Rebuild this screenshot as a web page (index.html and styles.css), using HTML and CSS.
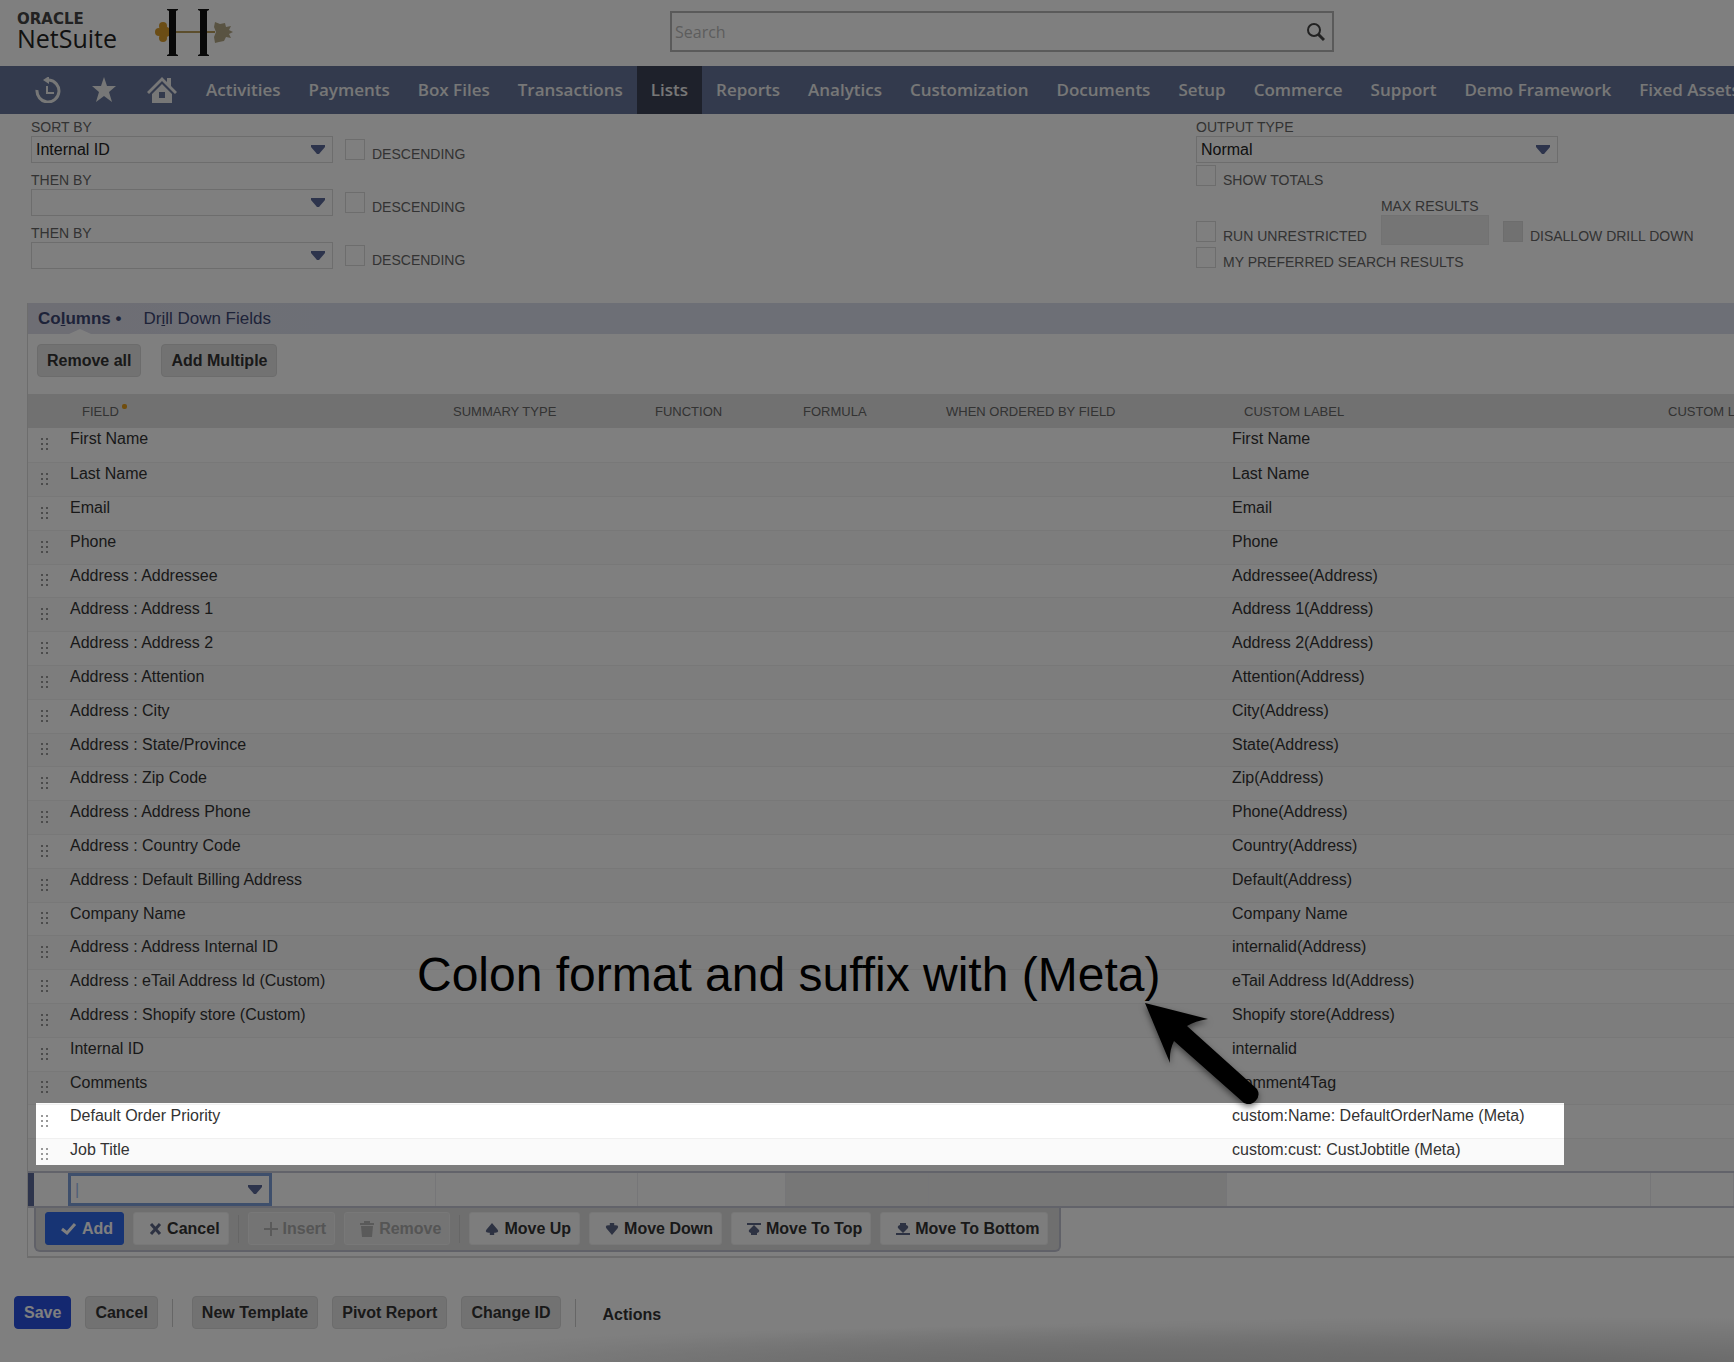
FILE: index.html
```html
<!DOCTYPE html>
<html lang="en">
  <head>
    <meta charset="utf-8" />
    <meta name="viewport" content="width=device-width, initial-scale=1.0" />
    <title>Saved Search - NetSuite</title>
    <link rel="stylesheet" href="styles.css">
  </head>
  <body>
    <header class="header">
      <div class="brand">
        <div class="brand-oracle">ORACLE</div>
        <div class="brand-name">NetSuite</div>
      </div>
      <svg class="company-logo" width="78" height="48" viewBox="0 0 78 48">
        <g fill="#d79a2b">
          <circle cx="8" cy="17" r="4" />
          <circle cx="4" cy="23" r="4" />
          <circle cx="8" cy="29" r="4" />
          <circle cx="11" cy="23" r="5" />
        </g>
        <path d="M20 23h40" stroke="#b99c5a" stroke-width="2" />
        <path d="M60 13l5 2 5-1 1 4 5-1-2 4 4 2-4 2 2 4-5-1-2 4-5 1-4 1-1-6 2-5-2-5z" fill="#b3a784" />
        <path d="M12 0h11v1l-2 1v43l2 1v1H12v-1l2-1V2l-2-1zM43 0h11v1l-2 1v43l2 1v1H43v-1l2-1V2l-2-1z" fill="#111" />
      </svg>
      <form class="search">
        <input type="text" placeholder="Search" aria-label="Search" />
        <button type="button" aria-label="Run search">
          <svg width="20" height="20" viewBox="0 0 20 20" fill="none" stroke="#444" stroke-width="2">
            <circle cx="9" cy="8" r="6" />
            <path d="M13 12l6 6" stroke-width="3" />
          </svg>
        </button>
      </form>
    </header>

    <nav class="nav">
      <a class="nav-icon" href="#recent" aria-label="Recent records">
        <svg width="26" height="26" viewBox="0 0 26 26" fill="none" stroke="currentColor" stroke-width="3">
          <path d="M2 13a11 11 0 1 0 12-10" />
          <path d="M12 9v7h7" stroke-width="2" />
          <path d="M8 3l6-4v8z" fill="currentColor" stroke="none" />
        </svg>
      </a>
      <a class="nav-icon" href="#shortcuts" aria-label="Shortcuts">
        <svg width="26" height="26" viewBox="0 0 26 26" fill="currentColor">
          <path d="M13 0l3 9h9l-7 6 3 10-8-6-8 6 3-10-7-6h9z" />
        </svg>
      </a>
      <a class="nav-icon" href="#home" aria-label="Home">
        <svg width="30" height="26" viewBox="0 0 30 26" fill="currentColor">
          <path d="M15 0l5 5V1h4v8l6 6-2 2L15 4 2 17l-2-2z" />
          <path d="M15 7l10 10v9H5v-9zM12 15v6h6v-6z" fill-rule="evenodd" />
        </svg>
      </a>
      <a href="#activities">Activities</a>
      <a href="#payments">Payments</a>
      <a href="#box">Box Files</a>
      <a href="#transactions">Transactions</a>
      <a class="active" href="#lists">Lists</a>
      <a href="#reports">Reports</a>
      <a href="#analytics">Analytics</a>
      <a href="#customization">Customization</a>
      <a href="#documents">Documents</a>
      <a href="#setup">Setup</a>
      <a href="#commerce">Commerce</a>
      <a href="#support">Support</a>
      <a href="#demo">Demo Framework</a>
      <a href="#assets">Fixed Assets</a>
    </nav>

    <section class="options">
      <div class="sort">
        <div class="sort-row">
          <div class="field">
            <label for="sort1">SORT BY</label>
            <select id="sort1"><option>Internal ID</option></select>
          </div>
          <label class="check"><input type="checkbox" />DESCENDING</label>
        </div>
        <div class="sort-row">
          <div class="field">
            <label for="sort2">THEN BY</label>
            <select id="sort2"><option></option></select>
          </div>
          <label class="check"><input type="checkbox" />DESCENDING</label>
        </div>
        <div class="sort-row">
          <div class="field">
            <label for="sort3">THEN BY</label>
            <select id="sort3"><option></option></select>
          </div>
          <label class="check"><input type="checkbox" />DESCENDING</label>
        </div>
      </div>

      <div class="output">
        <div class="field field-wide">
          <label for="output">OUTPUT TYPE</label>
          <select id="output"><option>Normal</option></select>
        </div>
        <label class="check"><input type="checkbox" />SHOW TOTALS</label>
        <div class="output-row">
          <label class="check"><input type="checkbox" />RUN UNRESTRICTED</label>
          <div class="field field-small">
            <label for="max">MAX RESULTS</label>
            <input id="max" type="text" disabled />
          </div>
          <label class="check"><input type="checkbox" disabled />DISALLOW DRILL DOWN</label>
        </div>
        <label class="check"><input type="checkbox" />MY PREFERRED SEARCH RESULTS</label>
      </div>
    </section>

    <section class="panel">
      <div class="tabs">
        <a class="tab active" href="#columns">Co<u>l</u>umns •</a>
        <a class="tab" href="#drill">Dr<u>i</u>ll Down Fields</a>
      </div>
      <div class="panel-actions">
        <button class="btn">Remove all</button>
        <button class="btn">Add Multiple</button>
      </div>

      <div class="sheet">
        <table class="columns">
          <colgroup>
            <col class="col-handle" />
            <col class="col-field" />
            <col class="col-summary" />
            <col class="col-function" />
            <col class="col-formula" />
            <col class="col-ordered" />
            <col class="col-label" />
            <col />
          </colgroup>
          <thead>
            <tr>
              <th></th>
              <th>FIELD<span class="required"></span></th>
              <th>SUMMARY TYPE</th>
              <th>FUNCTION</th>
              <th>FORMULA</th>
              <th>WHEN ORDERED BY FIELD</th>
              <th>CUSTOM LABEL</th>
              <th>CUSTOM LABEL</th>
            </tr>
          </thead>
          <tbody>
            <tr><td class="handle"></td><td>First Name</td><td></td><td></td><td></td><td></td><td>First Name</td><td></td></tr>
            <tr><td class="handle"></td><td>Last Name</td><td></td><td></td><td></td><td></td><td>Last Name</td><td></td></tr>
            <tr><td class="handle"></td><td>Email</td><td></td><td></td><td></td><td></td><td>Email</td><td></td></tr>
            <tr><td class="handle"></td><td>Phone</td><td></td><td></td><td></td><td></td><td>Phone</td><td></td></tr>
            <tr><td class="handle"></td><td>Address : Addressee</td><td></td><td></td><td></td><td></td><td>Addressee(Address)</td><td></td></tr>
            <tr><td class="handle"></td><td>Address : Address 1</td><td></td><td></td><td></td><td></td><td>Address 1(Address)</td><td></td></tr>
            <tr><td class="handle"></td><td>Address : Address 2</td><td></td><td></td><td></td><td></td><td>Address 2(Address)</td><td></td></tr>
            <tr><td class="handle"></td><td>Address : Attention</td><td></td><td></td><td></td><td></td><td>Attention(Address)</td><td></td></tr>
            <tr><td class="handle"></td><td>Address : City</td><td></td><td></td><td></td><td></td><td>City(Address)</td><td></td></tr>
            <tr><td class="handle"></td><td>Address : State/Province</td><td></td><td></td><td></td><td></td><td>State(Address)</td><td></td></tr>
            <tr><td class="handle"></td><td>Address : Zip Code</td><td></td><td></td><td></td><td></td><td>Zip(Address)</td><td></td></tr>
            <tr><td class="handle"></td><td>Address : Address Phone</td><td></td><td></td><td></td><td></td><td>Phone(Address)</td><td></td></tr>
            <tr><td class="handle"></td><td>Address : Country Code</td><td></td><td></td><td></td><td></td><td>Country(Address)</td><td></td></tr>
            <tr><td class="handle"></td><td>Address : Default Billing Address</td><td></td><td></td><td></td><td></td><td>Default(Address)</td><td></td></tr>
            <tr><td class="handle"></td><td>Company Name</td><td></td><td></td><td></td><td></td><td>Company Name</td><td></td></tr>
            <tr><td class="handle"></td><td>Address : Address Internal ID</td><td></td><td></td><td></td><td></td><td>internalid(Address)</td><td></td></tr>
            <tr><td class="handle"></td><td>Address : eTail Address Id (Custom)</td><td></td><td></td><td></td><td></td><td>eTail Address Id(Address)</td><td></td></tr>
            <tr><td class="handle"></td><td>Address : Shopify store (Custom)</td><td></td><td></td><td></td><td></td><td>Shopify store(Address)</td><td></td></tr>
            <tr><td class="handle"></td><td>Internal ID</td><td></td><td></td><td></td><td></td><td>internalid</td><td></td></tr>
            <tr><td class="handle"></td><td>Comments</td><td></td><td></td><td></td><td></td><td>Comment4Tag</td><td></td></tr>
            <tr><td class="handle"></td><td>Default Order Priority</td><td></td><td></td><td></td><td></td><td>custom:Name: DefaultOrderName (Meta)</td><td></td></tr>
            <tr><td class="handle"></td><td>Job Title</td><td></td><td></td><td></td><td></td><td>custom:cust: CustJobtitle (Meta)</td><td></td></tr>
          </tbody>
          <tfoot>
            <tr>
              <td class="marker"></td>
              <td class="edit"><select aria-label="Field"><option>|</option></select></td>
              <td></td>
              <td></td>
              <td class="locked"></td>
              <td class="locked"></td>
              <td></td>
              <td></td>
            </tr>
          </tfoot>
        </table>

        <div class="spotlight"></div>
        <div class="note">Colon format and suffix with (Meta)</div>
        <svg class="arrow" width="130" height="120" viewBox="0 0 130 120">
          <path d="M4 4L67 20Q54 22 46 27L116 90A10 10 0 0 1 103 104L33 42Q28 52 29 64Z" />
        </svg>
      </div>

      <div class="toolbar">
        <button class="tool primary">
          <svg width="16" height="12" viewBox="0 0 16 12"><path d="M1 6l5 4 8-9" fill="none" stroke="currentColor" stroke-width="3" /></svg>Add
        </button>
        <button class="tool">
          <svg width="13" height="12" viewBox="0 0 13 12"><path d="M2 1l9 10M11 1L2 11" fill="none" stroke="currentColor" stroke-width="3" /></svg>Cancel
        </button>
        <span class="divider"></span>
        <button class="tool" disabled>
          <svg width="14" height="14" viewBox="0 0 14 14"><path d="M7 0v14M0 7h14" fill="none" stroke="currentColor" stroke-width="2" /></svg>Insert
        </button>
        <button class="tool" disabled>
          <svg width="14" height="16" viewBox="0 0 14 16" fill="currentColor"><path d="M0 2h4V0h6v2h4v2H0zM1 5h12l-1 11H2z" /></svg>Remove
        </button>
        <span class="divider"></span>
        <button class="tool">
          <svg width="14" height="12" viewBox="0 0 12 11" fill="currentColor"><path d="M6 0l5 6q2 3-2 3H8v2H4V9H3Q-1 9 1 6z" /></svg>Move Up
        </button>
        <button class="tool">
          <svg width="14" height="12" viewBox="0 0 12 11" fill="currentColor"><path d="M6 11L1 5q-2-3 2-3h1V0h4v2h1q4 0 2 3z" /></svg>Move Down
        </button>
        <button class="tool">
          <svg width="14" height="12" viewBox="0 0 14 12" fill="currentColor"><path d="M0 0h14v2H0zM7 2l5 5q1 2-2 3v2H4v-2q-3-1-2-3z" /></svg>Move To Top
        </button>
        <button class="tool">
          <svg width="14" height="12" viewBox="0 0 14 12" fill="currentColor"><path d="M0 10h14v2H0zM7 10L2 5q-1-2 2-3V0h6v2q3 1 2 3z" /></svg>Move To Bottom
        </button>
      </div>
    </section>

    <footer class="footer">
      <button class="btn primary">Save</button>
      <button class="btn">Cancel</button>
      <span class="divider"></span>
      <button class="btn">New Template</button>
      <button class="btn">Pivot Report</button>
      <button class="btn">Change ID</button>
      <span class="divider"></span>
      <a class="actions" href="#actions">Actions</a>
    </footer>
  </body>
</html>
```
FILE: styles.css
```css
:root {
  --nav: #66759a;
  --nav-active: #3d4256;
  --ink: #333;
  --label: #666;
  --accent: #5b6899;
  --line: #dadada;
  --btn: #e4e4e4;
}

* {
  box-sizing: border-box;
  margin: 0;
  padding: 0;
}

body {
  display: flex;
  flex-direction: column;
  min-height: 100vh;
  overflow: hidden;
  background: #fff;
  color: var(--ink);
  font-family: "Liberation Sans", Arial, sans-serif;
  font-size: 16px;
  line-height: 20px;
}

button,
input,
select {
  font: inherit;
  color: inherit;
}

a {
  color: inherit;
  text-decoration: none;
}

/* Header */
.header {
  display: flex;
  height: 66px;
  padding: 9px 17px;
}

.brand {
  width: 138px;
  font-family: "Open Sans", sans-serif;
}

.brand-oracle {
  font-family: "DejaVu Sans", sans-serif;
  font-size: 15px;
  font-weight: bold;
  line-height: 20px;
  color: #444;
}

.brand-name {
  font-size: 25px;
  line-height: 18px;
  color: #222;
}

.search {
  display: flex;
  align-items: center;
  width: 664px;
  height: 41px;
  margin: 2px 0 0 437px;
  padding: 0 7px 0 3px;
  border: 2px solid #b4b4b4;
}

.search input {
  flex: 1;
  border: 0;
  background: none;
  font-family: "Open Sans", sans-serif;
}

.search input::placeholder {
  color: #bbb;
}

.search button {
  height: 20px;
  border: 0;
  background: none;
}

/* Navigation */
.nav {
  display: flex;
  height: 48px;
  padding-left: 20px;
  background: var(--nav);
  color: #eee;
  font-family: "Open Sans", sans-serif;
  font-size: 17px;
  font-weight: 600;
  line-height: 48px;
  white-space: nowrap;
}

.nav a {
  padding: 0 14px;
}

.nav .nav-icon {
  display: flex;
  align-items: center;
  padding: 0 15px;
}

.nav .active {
  background: var(--nav-active);
}

/* Search options */
.options {
  display: flex;
  justify-content: space-between;
  padding: 4px 34px 32px 31px;
  color: var(--label);
  font-size: 14px;
  line-height: 18px;
}

.sort {
  display: flex;
  flex-direction: column;
  gap: 8px;
}

.sort-row,
.output-row {
  display: flex;
  align-items: flex-end;
  gap: 12px;
}

.field {
  display: flex;
  flex-direction: column;
  width: 302px;
}

.field-wide {
  width: 362px;
}

.field-small {
  width: 108px;
}

.field input {
  height: 30px;
  border: 1px solid #e4e4e4;
  background: #ebebeb;
}

select {
  appearance: none;
  height: 27px;
  padding: 0 4px;
  border: 1px solid var(--line);
  background: #fff url("data:image/svg+xml,%3Csvg xmlns='http://www.w3.org/2000/svg' width='14' height='9'%3E%3Cpath d='M0 0h14v2L8 9H6L0 2z' fill='%235b6899'/%3E%3C/svg%3E") no-repeat right 7px center;
  color: #222;
  font-size: 16px;
}

.check {
  display: flex;
  align-items: flex-end;
  gap: 7px;
  height: 26px;
  padding-bottom: 3px;
  line-height: 12px;
}

.check input {
  appearance: none;
  width: 20px;
  height: 21px;
  border: 1px solid var(--line);
}

.check input:disabled {
  background: #e2e2e2;
}

.output {
  display: flex;
  flex-direction: column;
  width: 504px;
}

.output-row {
  gap: 14px;
  margin-top: 8px;
}

/* Sublist */
.panel {
  margin-left: 27px;
  border-left: 1px solid var(--line);
  border-bottom: 2px solid var(--line);
  padding-bottom: 4px;
}

.tabs {
  display: flex;
  gap: 22px;
  padding-left: 10px;
  background: linear-gradient(90deg, #dcdce8, #dbdfec 300px);
  color: #3d4673;
  font-size: 17px;
  line-height: 31px;
}

.tab.active {
  position: relative;
  font-weight: bold;
}

.tab.active::after {
  content: "";
  position: absolute;
  bottom: 0;
  left: 50%;
  margin-left: -11px;
  border: 11px solid transparent;
  border-top: 0;
  border-bottom: 5px solid #fff;
}

.panel-actions {
  display: flex;
  gap: 20px;
  padding: 10px 9px 17px;
}

.btn {
  height: 33px;
  padding: 0 9px;
  border: 1px solid #d8d8d8;
  border-radius: 4px;
  background: var(--btn);
  font-weight: bold;
  white-space: nowrap;
}

.btn.primary {
  border-color: #2850e0;
  background: #2850e0;
  color: #fff;
}

.sheet {
  position: relative;
}

.columns {
  width: 100%;
  table-layout: fixed;
  border-collapse: collapse;
  white-space: nowrap;
}

.col-handle { width: 36px; }
.col-field { width: 371px; }
.col-summary { width: 202px; }
.col-function { width: 148px; }
.col-formula { width: 143px; }
.col-ordered { width: 298px; }
.col-label { width: 424px; }

.columns th {
  height: 34px;
  padding: 2px 0 0 18px;
  background: #e2e2e2;
  color: var(--label);
  font-size: 13px;
  font-weight: normal;
  text-align: left;
}

.required {
  display: inline-block;
  width: 5px;
  height: 5px;
  margin: 2px 0 0 3px;
  border-radius: 2px;
  background: #e09a1a;
  vertical-align: top;
}

.columns td {
  height: 34px;
  padding: 1px 6px 0;
  vertical-align: top;
}

.columns tbody tr {
  border-bottom: 1px solid #f0f0f0;
}

.columns tbody tr:nth-child(even) {
  background: #fafafa;
}

.columns tbody tr:nth-child(5n) td {
  height: 33px;
}

.columns .handle {
  background: url("data:image/svg+xml,%3Csvg xmlns='http://www.w3.org/2000/svg' width='8' height='13' fill='%23999'%3E%3Cpath d='M0 0h2v2H0zM5 0h2v2H5zM0 5h2v2H0zM5 5h2v2H5zM0 10h2v2H0zM5 10h2v2H5z'/%3E%3C/svg%3E") no-repeat 13px center;
}

.columns tfoot tr {
  border-top: 2px solid #c4c6d4;
  border-bottom: 2px solid #c4c6d4;
}

.columns tfoot td {
  height: 35px;
  padding: 0;
  border-right: 1px solid #ececf0;
}

.columns tfoot .marker {
  border-right: 0;
  background: linear-gradient(90deg, var(--accent) 6px, transparent 6px);
}

.columns .locked {
  background: #eee;
}

.edit select {
  display: block;
  width: 204px;
  height: 33px;
  margin-left: 4px;
  border: 3px solid #7d9fd8;
  color: #9dbcf0;
}

/* Spotlight over the last two rows, everything else is dimmed */
.spotlight {
  position: absolute;
  left: 8px;
  right: 170px;
  bottom: 43px;
  height: 62px;
  box-shadow: 0 0 0 2000px rgba(0, 0, 0, 0.5);
  pointer-events: none;
}

.note {
  position: absolute;
  left: 389px;
  bottom: 205px;
  color: #000;
  font-size: 48px;
  line-height: 56px;
  white-space: nowrap;
}

.arrow {
  position: absolute;
  left: 1113px;
  bottom: 89px;
  filter: drop-shadow(0 3px 3px rgba(0, 0, 0, 0.5));
}

.toolbar {
  display: flex;
  align-items: center;
  gap: 9px;
  width: max-content;
  margin-left: 6px;
  padding: 4px 11px 5px 9px;
  border: 2px solid #c0c2d0;
  border-top: 0;
  border-radius: 0 0 6px 6px;
  background: #dedede;
}

.tool {
  display: flex;
  align-items: center;
  gap: 5px;
  height: 33px;
  padding: 0 8px 0 15px;
  border: 1px solid #f0f0f0;
  border-radius: 3px;
  background: #fbfbfb;
  font-weight: bold;
}

.tool svg {
  color: #5b6485;
}

.tool:disabled {
  background: #e8e8e8;
  color: #aaa;
}

.tool:disabled svg {
  color: #b4b4b4;
}

.tool.primary {
  padding: 0 10px 0 15px;
  border-color: #2f68e8;
  background: #2f68e8;
  color: #fff;
}

.tool.primary svg {
  color: #fff;
}

.divider {
  width: 1px;
  height: 28px;
  background: #ccc;
}

/* Footer */
.footer {
  display: flex;
  flex: 1;
  align-items: flex-start;
  gap: 14px;
  padding: 38px 14px 32px;
  background: radial-gradient(ellipse 60% 50px at 90% 100%, #d0d0d0, transparent), radial-gradient(ellipse 40% 40px at 60% 100%, #d8d8d8, transparent);
}

.footer .divider {
  margin-top: 3px;
}

.footer .divider + .btn {
  margin-left: 5px;
}

.actions {
  padding: 9px 13px;
  font-weight: bold;
}
```
